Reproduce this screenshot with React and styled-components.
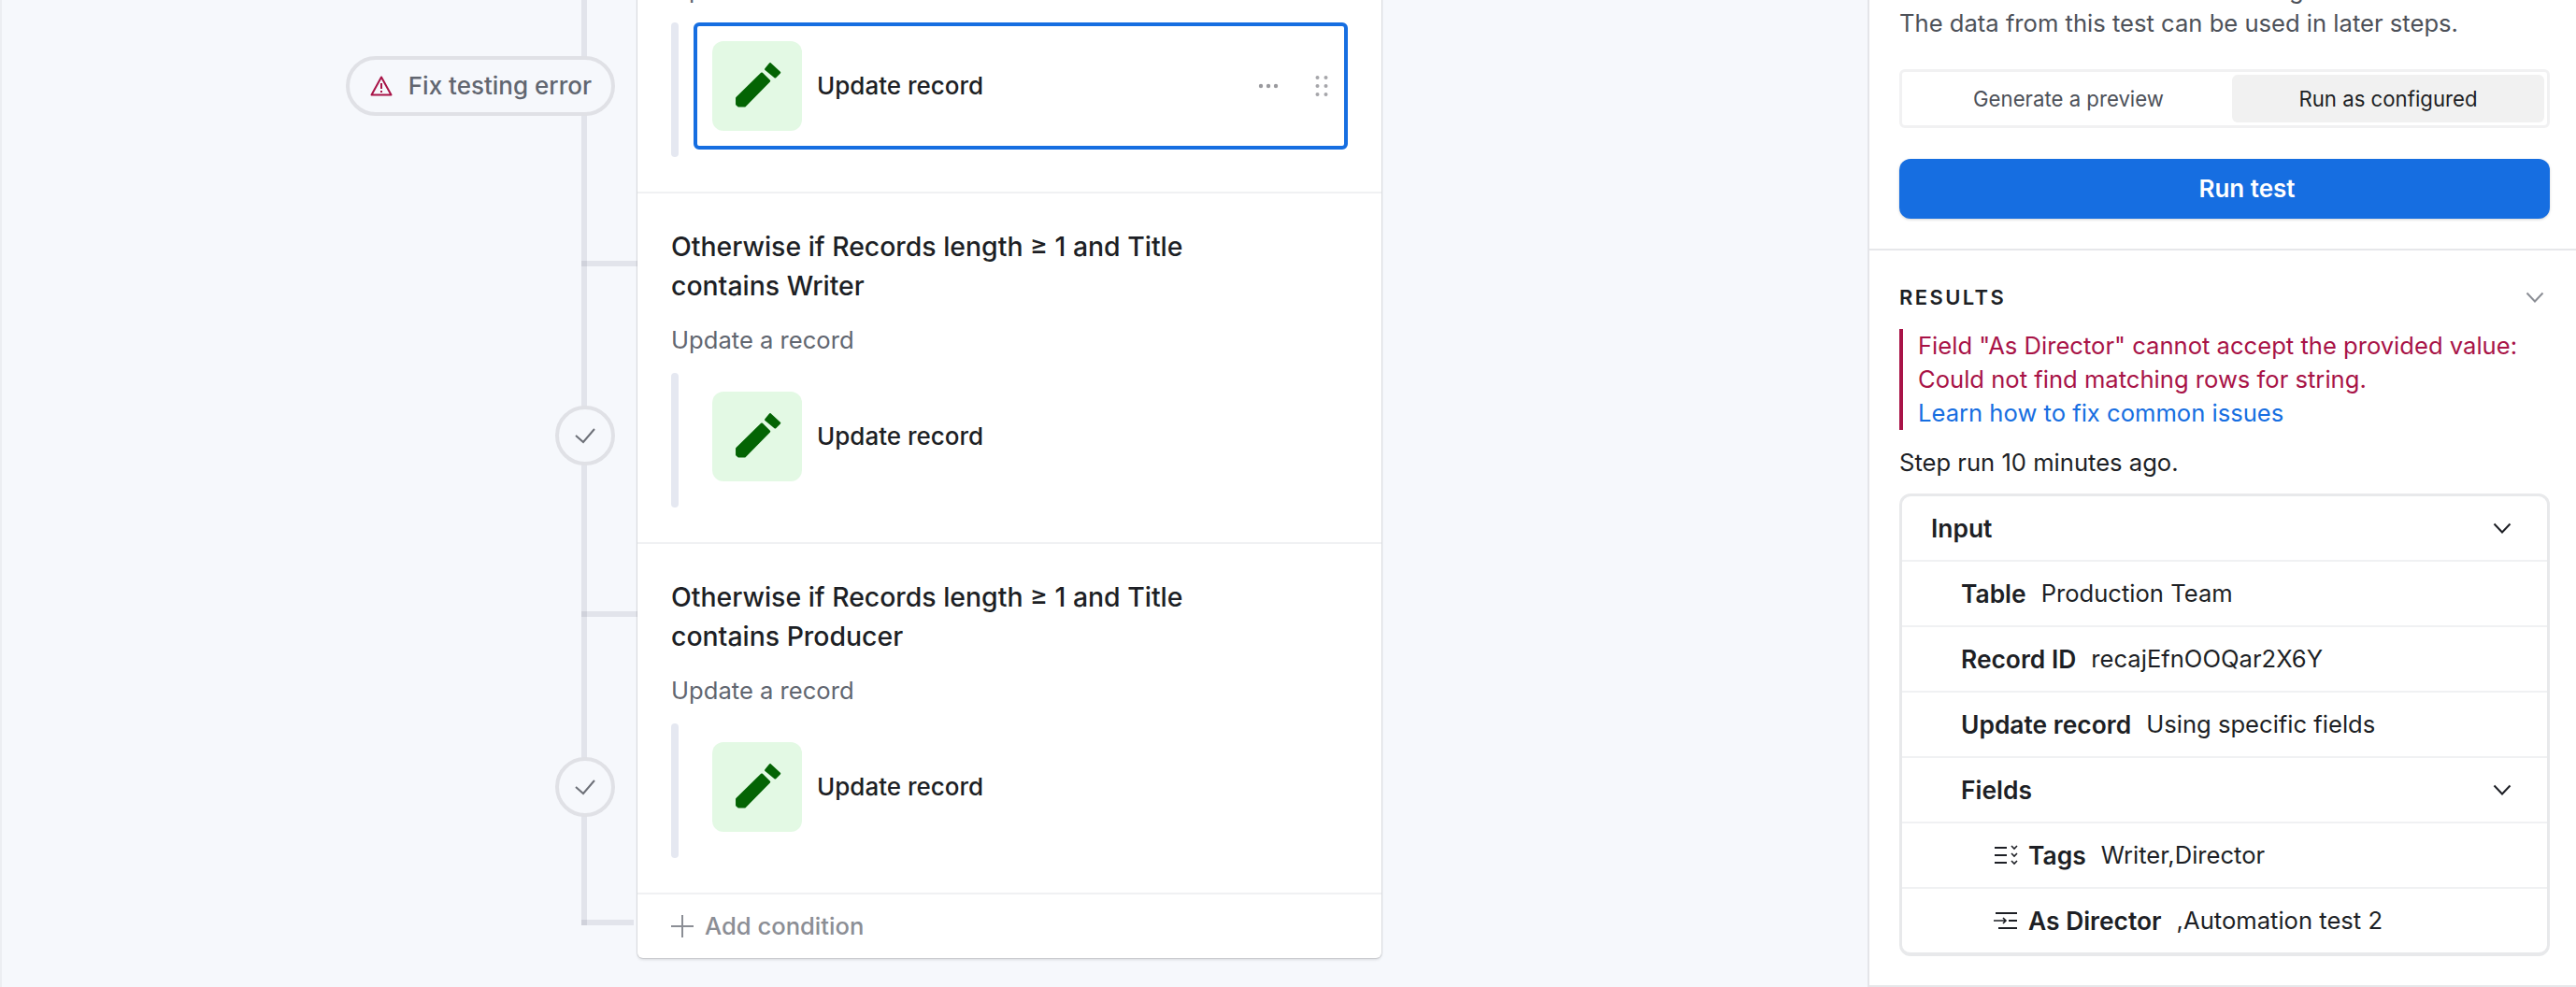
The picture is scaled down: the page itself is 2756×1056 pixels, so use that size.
import React from 'react';
import styled, { createGlobalStyle } from 'styled-components';

const GlobalStyle = createGlobalStyle`
  html, body {
    margin: 0;
    padding: 0;
    background: #f6f8fc;
  }
  * {
    box-sizing: border-box;
  }
`;

const Page = styled.div`
  display: flex;
  width: 2756px;
  height: 1056px;
  overflow: hidden;
  font-family: Inter, "Liberation Sans", sans-serif;
  font-size: 25.6px;
  line-height: 36px;
  color: #1d1f25;
`;

const Canvas = styled.main`
  display: flex;
  align-items: flex-start;
  width: 1998px;
  height: 100%;
  background: #f6f8fc;
  border-left: 2px solid #eceef2;
`;

const Rail = styled.div`
  display: flex;
  flex-direction: column;
  width: 680px;
  margin-top: -30px;
`;

const RailSegment = styled.div`
  position: relative;
  display: flex;
  justify-content: flex-end;
  align-items: flex-start;
  height: ${(p) => p.$height}px;
  padding-top: ${(p) => p.$markerTop || 0}px;
  padding-right: 24px;

  &::before {
    content: '';
    position: absolute;
    top: 0;
    bottom: 0;
    right: 54px;
    width: 6px;
    background: rgba(30, 34, 70, 0.09);
  }

  &::after {
    content: '';
    display: ${(p) => (p.$branchTop === undefined ? 'none' : 'block')};
    position: absolute;
    top: ${(p) => p.$branchTop}px;
    right: ${(p) => p.$branchRight ?? 0}px;
    width: ${(p) => 60 - (p.$branchRight ?? 0)}px;
    height: 6px;
    background: rgba(30, 34, 70, 0.09);
  }
`;

const ErrorPill = styled.div`
  position: relative;
  z-index: 1;
  display: flex;
  align-items: center;
  gap: 17px;
  height: 64px;
  padding: 0 21px 0 22px;
  border: 4px solid #e0e1e6;
  border-radius: 32px;
  background: #f6f8fc;
  color: #616670;
  font-size: 26px;
  font-weight: 500;
  white-space: nowrap;
`;

const CheckCircle = styled.div`
  position: relative;
  z-index: 1;
  display: flex;
  align-items: center;
  justify-content: center;
  width: 64px;
  height: 64px;
  border: 4px solid #e0e1e6;
  border-radius: 50%;
  background: #f6f8fc;
`;

const Card = styled.section`
  width: 796px;
  margin-top: -30px;
  background: #fff;
  border-radius: 0 0 6px 6px;
  box-shadow: 0 0 0 1px rgba(0, 0, 0, 0.08), 0 2px 3px rgba(0, 0, 0, 0.12);
`;

const Branch = styled.div`
  padding: ${(p) => (p.$first ? '1px' : '36px')} 36px 37px;
  border-bottom: 2px solid #f0f1f3;
`;

const BranchTitle = styled.h3`
  width: 560px;
  margin: 0 0 19px;
  font-size: 28.4px;
  line-height: 42px;
  font-weight: 500;
`;

const BranchSub = styled.div`
  margin-bottom: 17px;
  color: #616670;
`;

const StepRow = styled.div`
  display: flex;
  gap: 16px;
  height: 144px;
`;

const StepBar = styled.div`
  flex: none;
  width: 8px;
  height: 100%;
  border-radius: 4px;
  background: #e5e8f1;
`;

const StepBox = styled.div`
  display: flex;
  align-items: center;
  gap: 16px;
  width: 700px;
  height: 136px;
  padding: 0 16px;
  border: 4px solid ${(p) => (p.$selected ? '#166ee1' : 'transparent')};
  border-radius: 6px;
  font-size: 26px;
  font-weight: 500;
`;

const Tile = styled.div`
  display: flex;
  flex: none;
  width: 96px;
  height: 96px;
  border-radius: 12px;
  background: #e3f9e4;
`;

const StepTools = styled.div`
  display: flex;
  align-items: center;
  gap: 39px;
  margin-left: auto;
  padding-right: 1px;
`;

const AddRow = styled.div`
  display: flex;
  align-items: center;
  gap: 12px;
  height: 68px;
  padding: 0 36px;
  color: #8b8e95;
  font-weight: 500;
`;

const Panel = styled.aside`
  width: 758px;
  height: 100%;
  background: #fff;
  border-left: 2px solid #e4e5e9;
`;

const TestSection = styled.div`
  margin-top: -29px;
  padding: 0 28px 32px 32px;
  border-bottom: 2px solid #e6e7ea;
`;

const TestText = styled.p`
  margin: 0;
  color: #4d5159;
`;

const Toggle = styled.div`
  display: grid;
  grid-template-columns: 350px 1fr;
  height: 63px;
  margin-top: 31px;
  padding: 3px;
  border: 3px solid #f1f1f2;
  border-radius: 6px;
  font-size: 22.2px;
`;

const ToggleOption = styled.div`
  display: flex;
  align-items: center;
  justify-content: center;
  border-radius: 6px;
  background: ${(p) => (p.$active ? '#f1f1f1' : 'transparent')};
  color: ${(p) => (p.$active ? '#1d1f25' : '#4d5159')};
`;

const RunButton = styled.button`
  display: block;
  width: 100%;
  height: 64px;
  margin-top: 33px;
  padding: 0 0 0 48px;
  border: none;
  border-radius: 12px;
  background: #166ee1;
  box-shadow: 0 1px 3px rgba(0, 0, 0, 0.18);
  color: #fff;
  font: 600 26px/36px Inter, "Liberation Sans", sans-serif;
`;

const ResultsSection = styled.div`
  height: 788px;
  padding: 32px 28px 0 32px;
  border-bottom: 2px solid #e6e7ea;
`;

const ResultsHead = styled.div`
  display: flex;
  align-items: center;
  justify-content: space-between;
  padding-right: 6px;
`;

const ResultsTitle = styled.h4`
  margin: 0;
  font-size: 22px;
  line-height: 36px;
  font-weight: 600;
  letter-spacing: 2.4px;
`;

const ErrorBlock = styled.div`
  margin-top: 16px;
  padding-left: 16px;
  border-left: 4px solid #a81347;
  color: #a81347;
`;

const HelpLink = styled.a`
  display: block;
  color: #166ee1;
`;

const StepRun = styled.p`
  margin: 17px 0 15px;
`;

const InputTable = styled.div`
  border: 3px solid #e8e9eb;
  border-bottom-width: 4px;
  border-radius: 12px;
`;

const Row = styled.div`
  display: flex;
  align-items: center;
  gap: 16px;
  height: ${(p) => (p.$last ? 68 : 70)}px;
  padding: 0 38px 0 ${(p) => p.$indent}px;
  border-bottom: ${(p) => (p.$last ? 'none' : '2px solid #f0f1f3')};
`;

const RowLabel = styled.span`
  font-size: 26.4px;
  font-weight: 600;
`;

const RowIcon = styled.svg`
  flex: none;
  width: 26px;
  height: 26px;
  margin-right: -5px;
  color: #1d1f25;
`;

const RowChevron = styled.div`
  display: flex;
  margin-left: auto;
`;

const WarningIcon = () => (
  <svg width="24" height="24" viewBox="0 0 24 24" fill="none" stroke="#a81347" strokeWidth="2" strokeLinejoin="round">
    <path d="M12 2.5 22.5 21.5H1.5Z" />
    <path d="M12 9v6M12 17v2" />
  </svg>
);

const CheckIcon = () => (
  <svg width="24" height="20" viewBox="0 0 24 20" fill="none" stroke="#6d7078" strokeWidth="2">
    <path d="M2 10l8 7L22 3" />
  </svg>
);

const PencilIcon = () => (
  <svg width="96" height="96" viewBox="0 0 96 96" fill="#046404" stroke="#046404" strokeWidth="2.5" strokeLinejoin="round">
    <path d="M26.3 61 53 34.7 61 42.7 34.7 69.3H28.3L26.3 67.5Z" />
    <path d="M57.3 30 62 24.3 72 33.7 67.3 38.3Z" />
  </svg>
);

const DotsIcon = () => (
  <svg width="22" height="6" viewBox="0 0 22 6" fill="#9a9a9e">
    <circle cx="3" cy="3" r="2.2" />
    <circle cx="11" cy="3" r="2.2" />
    <circle cx="19" cy="3" r="2.2" />
  </svg>
);

const GripIcon = () => (
  <svg width="14" height="22" viewBox="0 0 14 22" fill="#a6a6aa">
    {[2, 11, 20].map((y) => (
      <React.Fragment key={y}>
        <circle cx="2.5" cy={y} r="2" />
        <circle cx="11.5" cy={y} r="2" />
      </React.Fragment>
    ))}
  </svg>
);

const PlusIcon = () => (
  <svg width="24" height="24" viewBox="0 0 24 24" fill="none" stroke="#8b8e95" strokeWidth="2">
    <path d="M12 0v24M0 12h24" />
  </svg>
);

const Chevron = ({ color = '#1d1f25' }) => (
  <svg width="20" height="12" viewBox="0 0 20 12" fill="none" stroke={color} strokeWidth="2">
    <path d="M1.5 1.5 10 10.5 18.5 1.5" />
  </svg>
);

const TagsIcon = () => (
  <RowIcon viewBox="0 0 26 26" fill="none" stroke="currentColor" strokeWidth="2">
    <path d="M1 5h13M1 13h13M1 21h13" />
    <path strokeWidth="1.6" d="M19 3l3 3 3-3M19 11l3 3 3-3M19 19l3 3 3-3" />
  </RowIcon>
);

const IndentIcon = () => (
  <RowIcon viewBox="0 0 26 26" fill="none" stroke="currentColor" strokeWidth="2">
    <path d="M2 5h23M5 21h20M16 13h9" />
    <path strokeWidth="1.6" d="M0 13h13M10 10l3 3-3 3" />
  </RowIcon>
);

const StepCard = ({ selected }) => (
  <StepRow>
    <StepBar />
    <StepBox $selected={selected}>
      <Tile>
        <PencilIcon />
      </Tile>
      Update record
      {selected && (
        <StepTools>
          <DotsIcon />
          <GripIcon />
        </StepTools>
      )}
    </StepBox>
  </StepRow>
);

const conditions = ['Writer', 'Producer'];

const App = () => (
  <Page>
    <GlobalStyle />
    <Canvas>
      <Rail>
        <RailSegment $height={237} $markerTop={90}>
          <ErrorPill>
            <WarningIcon />
            Fix testing error
          </ErrorPill>
        </RailSegment>
        <RailSegment $height={375} $markerTop={227} $branchTop={72}>
          <CheckCircle>
            <CheckIcon />
          </CheckCircle>
        </RailSegment>
        <RailSegment $height={375} $markerTop={228} $branchTop={72}>
          <CheckCircle>
            <CheckIcon />
          </CheckCircle>
        </RailSegment>
        <RailSegment $height={33} $branchTop={27} $branchRight={4} />
      </Rail>
      <Card>
        <Branch $first>
          <BranchSub>Update a record</BranchSub>
          <StepCard selected />
        </Branch>
        {conditions.map((name) => (
          <Branch key={name}>
            <BranchTitle>Otherwise if Records length ≥ 1 and Title contains {name}</BranchTitle>
            <BranchSub>Update a record</BranchSub>
            <StepCard />
          </Branch>
        ))}
        <AddRow>
          <PlusIcon />
          Add condition
        </AddRow>
      </Card>
    </Canvas>
    <Panel>
      <TestSection>
        <TestText>Test this action to confirm its configuration is correct.</TestText>
        <TestText>The data from this test can be used in later steps.</TestText>
        <Toggle>
          <ToggleOption>Generate a preview</ToggleOption>
          <ToggleOption $active>Run as configured</ToggleOption>
        </Toggle>
        <RunButton>Run test</RunButton>
      </TestSection>
      <ResultsSection>
        <ResultsHead>
          <ResultsTitle>RESULTS</ResultsTitle>
          <Chevron color="#8b8e95" />
        </ResultsHead>
        <ErrorBlock>
          Field "As Director" cannot accept the provided value:
          <br />
          Could not find matching rows for string.
          <HelpLink>Learn how to fix common issues</HelpLink>
        </ErrorBlock>
        <StepRun>Step run 10 minutes ago.</StepRun>
        <InputTable>
          <Row $indent={31}>
            <RowLabel>Input</RowLabel>
            <RowChevron><Chevron /></RowChevron>
          </Row>
          <Row $indent={63}>
            <RowLabel>Table</RowLabel>
            Production Team
          </Row>
          <Row $indent={63}>
            <RowLabel>Record ID</RowLabel>
            recajEfnOOQar2X6Y
          </Row>
          <Row $indent={63}>
            <RowLabel>Update record</RowLabel>
            Using specific fields
          </Row>
          <Row $indent={63}>
            <RowLabel>Fields</RowLabel>
            <RowChevron><Chevron /></RowChevron>
          </Row>
          <Row $indent={98}>
            <TagsIcon />
            <RowLabel>Tags</RowLabel>
            Writer,Director
          </Row>
          <Row $indent={98} $last>
            <IndentIcon />
            <RowLabel>As Director</RowLabel>
            ,Automation test 2
          </Row>
        </InputTable>
      </ResultsSection>
    </Panel>
  </Page>
);

export default App;
